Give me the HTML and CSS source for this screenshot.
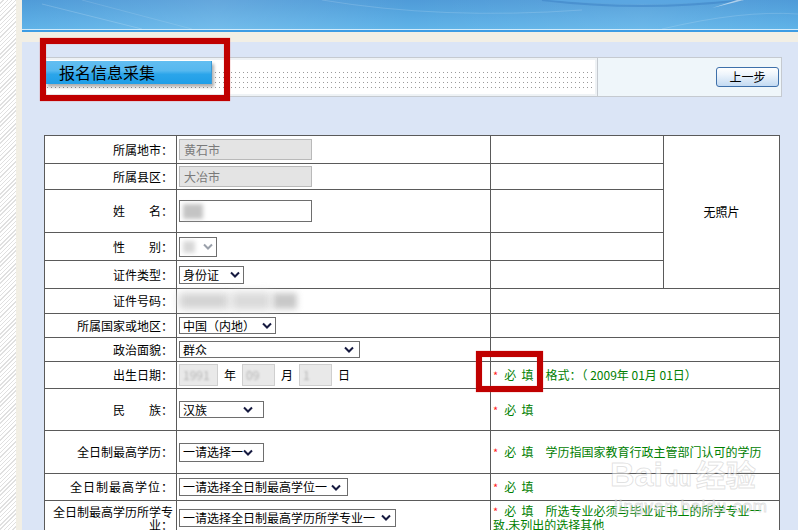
FILE: index.html
```html
<!DOCTYPE html>
<html lang="zh-CN">
<head>
<meta charset="utf-8">
<title>报名信息采集</title>
<link rel="stylesheet" href="styles.css">
</head>
<body>
<div class="page">
  <div class="hatch"></div>
  <div class="edge"></div>
  <div class="main">
    <div class="banner">
      <svg width="776" height="29" viewBox="0 0 776 29">
        <defs>
          <linearGradient id="bg" x1="0" y1="0" x2="0" y2="1">
            <stop offset="0" stop-color="#4f9bd8"/>
            <stop offset="1" stop-color="#5fb3e8"/>
          </linearGradient>
          <linearGradient id="bh" x1="0" y1="0" x2="1" y2="0">
            <stop offset="0" stop-color="#ffffff" stop-opacity="0"/>
            <stop offset="0.25" stop-color="#ffffff" stop-opacity="0.12"/>
            <stop offset="0.5" stop-color="#ffffff" stop-opacity="0"/>
            <stop offset="0.8" stop-color="#ffffff" stop-opacity="0.08"/>
            <stop offset="1" stop-color="#ffffff" stop-opacity="0"/>
          </linearGradient>
        </defs>
        <rect width="776" height="29" fill="url(#bg)"/>
        <rect width="776" height="29" fill="url(#bh)"/>
        <path d="M20 4 L120 29" stroke="#ffffff" stroke-opacity="0.18" stroke-width="1"/>
        <path d="M60 0 L170 29" stroke="#ffffff" stroke-opacity="0.12" stroke-width="1"/>
        <path d="M300 0 Q420 20 560 10" stroke="#ffffff" stroke-opacity="0.15" fill="none"/>
        <path d="M520 0 Q620 12 720 0" stroke="#3f86c8" stroke-opacity="0.6" stroke-width="2" fill="none"/>
        <path d="M525 0 Q620 8 715 0 Z" fill="#5aa8e4" fill-opacity="0.6"/>
        <path d="M690 8 L715 0 L722 0 Z" fill="#ffffff" fill-opacity="0.55"/>
        <path d="M640 29 Q720 10 776 14" stroke="#ffffff" stroke-opacity="0.15" fill="none"/>
      </svg>
    </div>
    <div class="line-light"></div>
    <div class="line-blue"></div>
    <div class="band"></div>
    <div class="content">
      <div class="bar">
        <div class="bar-left">
          <div class="dots">
            <div class="tab">报名信息采集</div>
          </div>
        </div>
        <div class="bar-right">
          <button class="btn" type="button">上一步</button>
        </div>
      </div>

      <table class="form">
        <colgroup>
          <col class="c1"><col class="c2"><col class="c3"><col class="c4">
        </colgroup>
        <tr class="r28">
          <td class="lbl">所属地市：</td>
          <td class="fld"><span class="ro">黄石市</span></td>
          <td></td>
          <td class="photo" rowspan="5">无照片</td>
        </tr>
        <tr class="r26">
          <td class="lbl">所属县区：</td>
          <td class="fld"><span class="ro">大冶市</span></td>
          <td></td>
        </tr>
        <tr class="r43">
          <td class="lbl">姓　　名：</td>
          <td class="fld"><span class="txt"><span class="blur blur-name"></span></span></td>
          <td></td>
        </tr>
        <tr class="r28">
          <td class="lbl">性　　别：</td>
          <td class="fld"><span class="sel sel-sex"><span class="blur blur-sex"></span><svg class="chev" width="10" height="7" viewBox="0 0 10 7"><path d="M1 1.5 L5 5.5 L9 1.5" fill="none" stroke="#9aa0aa" stroke-width="2"/></svg></span></td>
          <td></td>
        </tr>
        <tr class="r28">
          <td class="lbl">证件类型：</td>
          <td class="fld"><span class="sel sel-id"><span>身份证</span><svg class="chev" width="10" height="7" viewBox="0 0 10 7"><path d="M1 1.5 L5 5.5 L9 1.5" fill="none" stroke="#161a40" stroke-width="2"/></svg></span></td>
          <td></td>
        </tr>
        <tr class="r25">
          <td class="lbl">证件号码：</td>
          <td class="fld"><span class="idblur"><span class="blur b1"></span><span class="blur b2"></span><span class="blur b3"></span></span></td>
          <td colspan="2"></td>
        </tr>
        <tr class="r24">
          <td class="lbl">所属国家或地区：</td>
          <td class="fld"><span class="sel sel-country"><span>中国（内地）</span><svg class="chev" width="10" height="7" viewBox="0 0 10 7"><path d="M1 1.5 L5 5.5 L9 1.5" fill="none" stroke="#161a40" stroke-width="2"/></svg></span></td>
          <td colspan="2"></td>
        </tr>
        <tr class="r24">
          <td class="lbl">政治面貌：</td>
          <td class="fld"><span class="sel sel-party"><span>群众</span><svg class="chev" width="10" height="7" viewBox="0 0 10 7"><path d="M1 1.5 L5 5.5 L9 1.5" fill="none" stroke="#161a40" stroke-width="2"/></svg></span></td>
          <td colspan="2"></td>
        </tr>
        <tr class="r27">
          <td class="lbl">出生日期：</td>
          <td class="fld">
            <span class="date">
              <span class="din dy"><span class="dtx">1991</span></span><span class="du">年</span>
              <span class="din dm"><span class="dtx">09</span></span><span class="du">月</span>
              <span class="din dm"><span class="dtx">1</span></span><span class="du">日</span>
            </span>
          </td>
          <td colspan="2" class="note"><span class="req">*</span>必&nbsp;&nbsp;填　格式：（ 2009年 01月 01日）</td>
        </tr>
        <tr class="r42">
          <td class="lbl">民　　族：</td>
          <td class="fld"><span class="sel sel-nation"><span>汉族</span><svg class="chev" width="10" height="7" viewBox="0 0 10 7"><path d="M1 1.5 L5 5.5 L9 1.5" fill="none" stroke="#161a40" stroke-width="2"/></svg></span></td>
          <td colspan="2" class="note"><span class="req">*</span>必&nbsp;&nbsp;填</td>
        </tr>
        <tr class="r43">
          <td class="lbl">全日制最高学历：</td>
          <td class="fld"><span class="sel sel-edu"><span>一请选择一</span><svg class="chev" width="10" height="7" viewBox="0 0 10 7"><path d="M1 1.5 L5 5.5 L9 1.5" fill="none" stroke="#161a40" stroke-width="2"/></svg></span></td>
          <td colspan="2" class="note"><span class="req">*</span>必&nbsp;&nbsp;填　学历指国家教育行政主管部门认可的学历</td>
        </tr>
        <tr class="r27">
          <td class="lbl spaced">全日制最高学位：</td>
          <td class="fld"><span class="sel sel-deg"><span>一请选择全日制最高学位一</span><svg class="chev" width="10" height="7" viewBox="0 0 10 7"><path d="M1 1.5 L5 5.5 L9 1.5" fill="none" stroke="#161a40" stroke-width="2"/></svg></span></td>
          <td colspan="2" class="note"><span class="req">*</span>必&nbsp;&nbsp;填</td>
        </tr>
        <tr class="r34">
          <td class="lbl tight">全日制最高学历所学专业：</td>
          <td class="fld"><span class="sel sel-major"><span>一请选择全日制最高学历所学专业一</span><svg class="chev" width="10" height="7" viewBox="0 0 10 7"><path d="M1 1.5 L5 5.5 L9 1.5" fill="none" stroke="#161a40" stroke-width="2"/></svg></span></td>
          <td colspan="2" class="note tight"><span class="req">*</span>必&nbsp;&nbsp;填　所选专业必须与毕业证书上的所学专业一<br>致,未列出的选择其他</td>
        </tr>
      </table>
    </div>
  </div>
</div>

<div class="mark mark-title"></div>
<div class="mark mark-req"></div>

<div class="wm">
  <div class="wm-logo">Bai<span class="wm-du">du</span><span class="wm-cn">经验</span></div>
  <div class="wm-url">jingyan.baidu.com</div>
</div>
</body>
</html>
```

FILE: styles.css
```css
* { box-sizing: border-box; }
html, body { margin: 0; padding: 0; }
body {
  width: 798px;
  height: 530px;
  overflow: hidden;
  position: relative;
  font-family: "Noto Sans CJK SC", "Noto Sans", sans-serif;
  font-size: 12px;
  color: #000;
  background: #dbe5f6;
}

.page { display: flex; height: 530px; overflow: hidden; }
.hatch {
  width: 16px;
  flex: none;
  background: repeating-linear-gradient(135deg, #ffffff 0 2px, #e0e0e0 2px 3px);
}
.edge { width: 6px; flex: none; background: #f2efe5; }
.main { flex: 1; display: flex; flex-direction: column; min-width: 0; }

.banner { height: 29px; flex: none; overflow: hidden; }
.banner svg { display: block; }
.line-light { height: 1px; flex: none; background: #d2ebfb; }
.line-blue { height: 2px; flex: none; background: #3d9ce4; }
.band { height: 10px; flex: none; background: #f2efe5; }

.content {
  flex: 1 1 auto;
  min-height: 0;
  background: #dbe5f6;
  padding: 15px 16px 0 22px;
}

/* header bar */
.bar {
  display: flex;
  height: 40px;
  border: 1px solid #c5cad0;
}
.bar-left {
  width: 553px;
  flex: none;
  background: #fff;
  border-right: 1px solid #c5cad0;
  padding: 3px 4px 0 0;
  box-shadow: inset 0 0 0 2px #eef2f5;
}
.dots {
  height: 29px;
  background:
    linear-gradient(#fff, #fff) 0 0 / 100% 9px no-repeat,
    linear-gradient(90deg, transparent 0 1px, #fff 1px 4px) 2px 0 / 4px 100%,
    linear-gradient(transparent 0 2px, #9a9a9a 2px 3px, transparent 3px 5px) 0 9px / 100% 5px,
    #fff;
}
.tab {
  width: 167px;
  height: 23px;
  padding-left: 14px;
  font-size: 16px;
  line-height: 23px;
  color: #000;
  background: linear-gradient(#62bef1 0%, #56b8ef 42%, #2ba5ea 58%, #1f9ee7 100%);
  box-shadow: 2px 3px 3px rgba(0, 0, 0, 0.32);
  border-right: 1px solid #3a9ad6;
}
.bar-right {
  flex: 1;
  background: #eff6fa;
  display: flex;
  align-items: center;
  justify-content: flex-end;
  padding: 0 2px 0 0;
}
.btn {
  width: 63px;
  height: 20px;
  margin: 0;
  padding: 0;
  border: 1px solid #3e70aa;
  border-radius: 3px;
  background: linear-gradient(#ffffff 0%, #eef5fc 35%, #c3daf2 100%);
  font-family: "Noto Sans CJK SC", sans-serif;
  font-size: 12px;
  line-height: 18px;
  color: #000;
}

/* table */
.form {
  margin-top: 38px;
  width: 735px;
  border-collapse: collapse;
  table-layout: fixed;
  background: #fff;
}
.form td {
  border: 1px solid #5a5a5a;
  padding: 0;
  line-height: 14px;
  vertical-align: middle;
}
.c1 { width: 132px; }
.c2 { width: 314px; }
.c3 { width: 173px; }
.c4 { width: 116px; }

.r24 { height: 24px; }
.r25 { height: 25px; }
.r26 { height: 26px; }
.r27 { height: 27px; }
.r28 { height: 28px; }
.r34 { height: 34px; }
.r42 { height: 42px; }
.r43 { height: 43px; }

.lbl { text-align: right; padding-right: 3px !important; }
.lbl.spaced { letter-spacing: 1px; padding-right: 2px !important; }
.lbl.tight, .note.tight { line-height: 13px; }
.fld { padding-left: 2px !important; }
.photo { text-align: center; }
.note { padding-left: 2px !important; color: #008000; }
.req { color: #ff2020; margin-right: 6px; font-size: 11px; }

/* inputs */
.ro {
  display: inline-flex;
  align-items: center;
  width: 133px;
  height: 21px;
  padding-left: 4px;
  background: #e4e4e4;
  border: 1px solid #b9b9b9;
  color: #7a7a7a;
  vertical-align: middle;
}
.txt {
  display: inline-flex;
  align-items: center;
  width: 133px;
  height: 22px;
  padding-left: 3px;
  background: #fff;
  border: 1px solid #6e6e6e;
  vertical-align: middle;
}
.blur { display: inline-block; filter: blur(2px); }
.blur-name { width: 20px; height: 15px; background: #c4c4c4; }
.sel {
  display: inline-flex;
  align-items: center;
  justify-content: space-between;
  padding: 0 3px 0 3px;
  background: #fff;
  border: 1px solid #6e6e6e;
  vertical-align: middle;
  white-space: nowrap;
}
.chev { display: block; flex: none; }
.sel-sex { width: 38px; height: 20px; }
.blur-sex { width: 12px; height: 12px; background: #d8d8d8; }
.sel-id { width: 65px; height: 18px; }
.sel-country { width: 97px; height: 17px; }
.sel-party { width: 181px; height: 17px; padding-right: 5px; }
.sel-nation { width: 85px; height: 17px; padding-right: 10px; }
.sel-edu { width: 85px; height: 19px; padding-right: 10px; }
.sel-deg { width: 169px; height: 18px; padding-right: 6px; }
.sel-major { width: 217px; height: 18px; padding-right: 4px; }

.idblur { display: inline-flex; align-items: center; gap: 2px; height: 22px; vertical-align: middle; }
.b1 { width: 50px; height: 16px; background: #d2d2d2; filter: blur(4px); }
.b2 { width: 40px; height: 18px; background: #dadada; filter: blur(4px); }
.b3 { width: 24px; height: 16px; background: #c8c8c8; filter: blur(3px); }

.date { display: inline-flex; align-items: center; vertical-align: middle; }
.din {
  display: inline-flex;
  align-items: center;
  height: 22px;
  padding-left: 3px;
  background: #e9e9e9;
  border: 1px solid #cfcfcf;
  overflow: hidden;
}
.dy { width: 39px; }
.dm { width: 33px; }
.dtx { color: #b4b4b4; filter: blur(0.8px); }
.du { margin: 0 6px 0 6px; }

/* annotation boxes */
.mark {
  position: absolute;
  border: 6px solid #c00000;
  box-shadow: 0 0 1px #e06060, inset 0 0 1px #e06060;
}
.mark-title { left: 40px; top: 38px; width: 190px; height: 63px; }
.mark-req { left: 476px; top: 351px; width: 67px; height: 41px; }

/* watermark */
.wm {
  position: absolute;
  left: 610px;
  top: 454px;
  width: 150px;
  color: rgba(255, 255, 255, 0.5);
  -webkit-text-stroke: 1px rgba(150, 150, 150, 0.28);
  pointer-events: none;
}
.wm-logo {
  font-family: "Liberation Sans", sans-serif;
  font-weight: bold;
  font-size: 34px;
  line-height: 38px;
  white-space: nowrap;
}
.wm-du { font-size: 22px; margin-left: 2px; }
.wm-cn { font-family: "Noto Sans CJK SC", sans-serif; font-size: 30px; margin-left: 4px; }
.wm-url {
  font-family: "Liberation Sans", sans-serif;
  font-size: 17px;
  line-height: 18px;
  letter-spacing: 1px;
  padding-left: 4px;
}
```
